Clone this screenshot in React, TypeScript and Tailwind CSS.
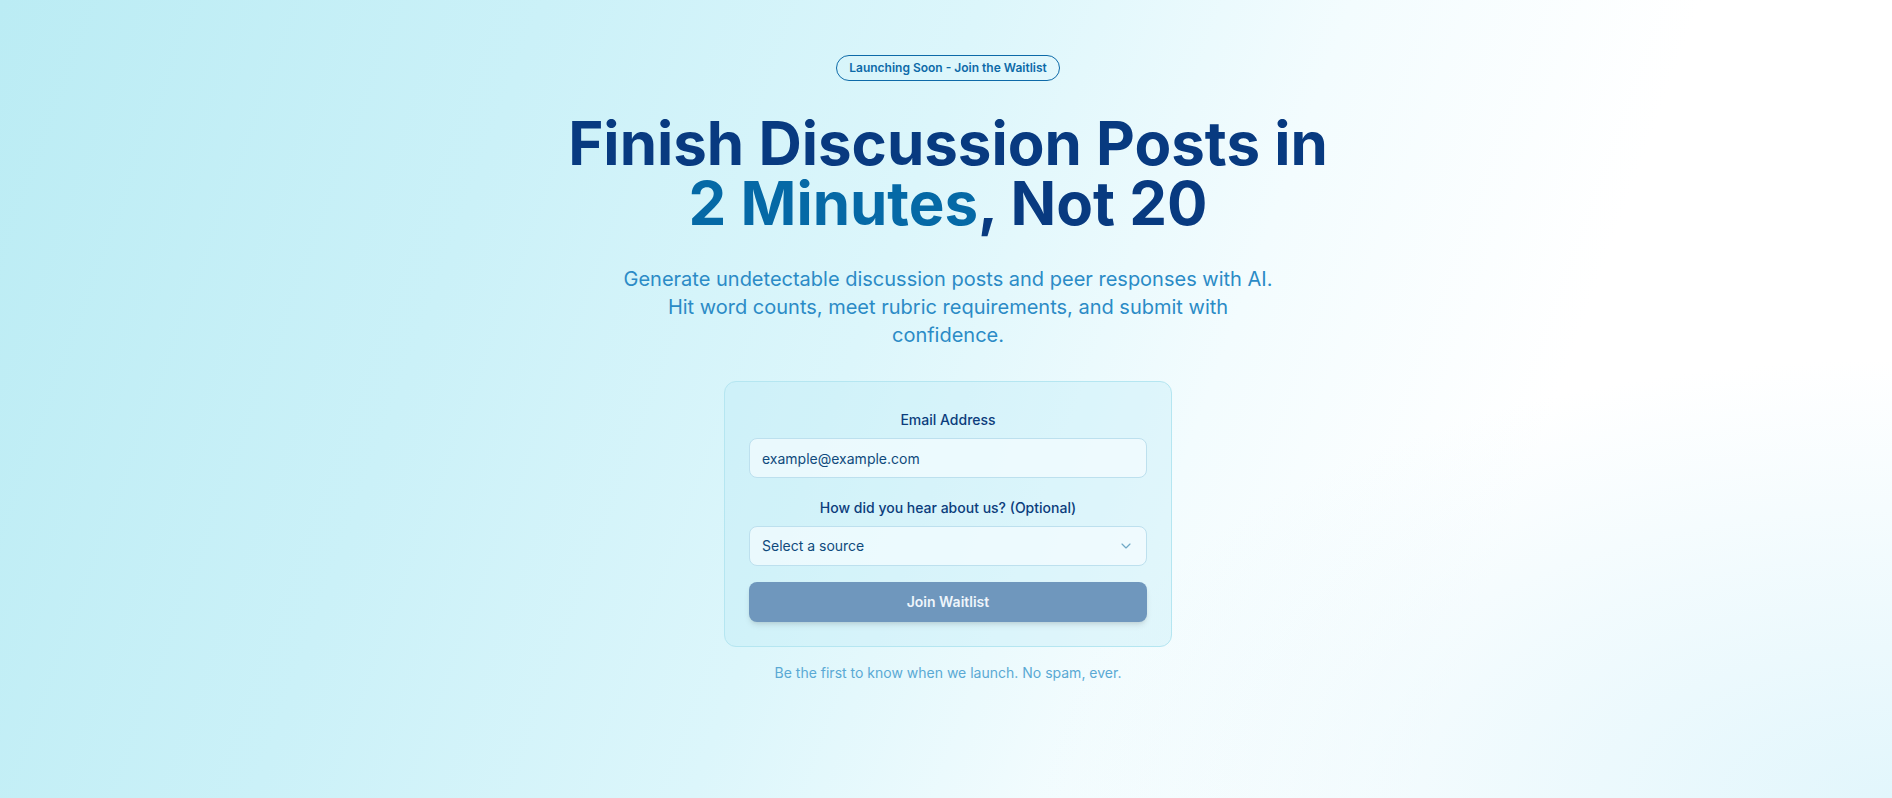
import React from 'react';
import { ChevronDown } from 'lucide-react';

export default function App() {
  return (
    <div
      className="min-h-screen w-full bg-[radial-gradient(ellipse_45%_55%_at_100%_100%,#e2f6fc_0%,rgba(255,255,255,0)_100%),linear-gradient(110deg,#bbecf4_0%,#cbf1f8_25%,#dcf6fb_45%,#f3fcfe_62%,#ffffff_78%,#ffffff_100%)] font-['Inter','Noto_Sans',sans-serif]"
    >
      <div className="flex flex-col items-center pl-[28px] pr-6 pt-[55px] pb-24 text-center">
        {/* Badge */}
        <span className="rounded-full border border-[#0d6aa8] px-3 py-1 text-xs font-semibold text-[#0d6aa8]">
          Launching Soon - Join the Waitlist
        </span>

        {/* Heading */}
        <h1 className="mt-8 text-6xl font-bold leading-none text-[#083a80]">
          Finish Discussion Posts in
          <br />
          <span className="text-[#0569a6]">2 Minutes</span>, Not 20
        </h1>

        <p className="mt-8 max-w-2xl text-xl leading-7 text-[#2b8bc6]">
          Generate undetectable discussion posts and peer responses with AI. Hit word counts, meet rubric
          requirements, and submit with confidence.
        </p>

        {/* Waitlist form */}
        <form
          className="mt-8 w-full max-w-md rounded-xl border border-[#b5e6f1] bg-[rgba(190,236,246,0.35)] px-6 pt-7 pb-6"
          onSubmit={(e) => e.preventDefault()}
        >
          <div className="space-y-5">
            <div>
              <label className="mb-2 block text-sm font-medium text-[#0c3d7c]">Email Address</label>
              <input
                type="email"
                defaultValue="example@example.com"
                className="h-10 w-full rounded-lg border border-[#bde0ee] bg-[rgba(245,252,255,0.7)] px-3 text-sm text-[#0f4a7c] outline-none"
              />
            </div>
            <div>
              <label className="mb-2 block text-sm font-medium text-[#0c3d7c]">
                How did you hear about us? (Optional)
              </label>
              <div className="flex h-10 w-full items-center justify-between rounded-lg border border-[#bde0ee] bg-[rgba(245,252,255,0.7)] px-3 text-sm text-[#0f4a7c]">
                <span>Select a source</span>
                <ChevronDown className="h-4 w-4 text-[#6fa8c6]" strokeWidth={1.75} />
              </div>
            </div>
          </div>
          <button
            type="submit"
            className="mt-4 h-10 w-full rounded-lg bg-[#6f97bd] text-sm font-semibold text-[#eef5fb] shadow-md"
          >
            Join Waitlist
          </button>
        </form>

        <p className="mt-4 text-sm text-[#5aa9d4]">Be the first to know when we launch. No spam, ever.</p>
      </div>
    </div>
  );
}
